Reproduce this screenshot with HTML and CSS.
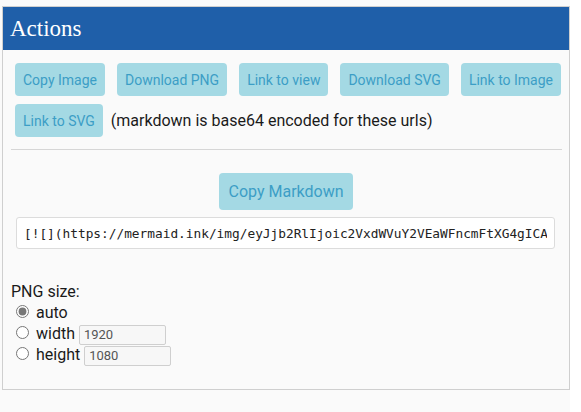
FILE: index.html
```html
<!DOCTYPE html>
<html>
<head>
<meta charset="utf-8">
<link rel="stylesheet" href="styles.css">
</head>
<body>
<div class="wrap">
  <section class="card">
    <h2 class="card-title">Actions</h2>
    <div class="card-body">
      <div class="btn-row">
        <button class="btn">Copy Image</button>
        <button class="btn">Download PNG</button>
        <button class="btn">Link to view</button>
        <button class="btn">Download SVG</button>
        <button class="btn">Link to Image</button>
        <button class="btn">Link to SVG</button>
        <span class="note">(markdown is base64 encoded for these urls)</span>
      </div>
      <hr class="divider">
      <div class="center">
        <button class="btn btn-lg">Copy Markdown</button>
      </div>
      <input class="md-input" type="text" readonly value="[![](https://mermaid.ink/img/eyJjb2RlIjoic2VxdWVuY2VEaWFncmFtXG4gICAgQWxpY2UtPj5Kb2huOiBIZWxsbyBKb2huIiwibWVybWFpZCI6eyJ0aGVtZSI6ImRlZmF1bHQifX0)](https://mermaid.live/edit)">
      <div class="png-size">
        <div class="ps-title">PNG size:</div>
        <label class="ps-opt"><input type="radio" name="ps" checked> auto</label>
        <label class="ps-opt"><input type="radio" name="ps"> width <input class="num" type="text" value="1920"></label>
        <label class="ps-opt"><input type="radio" name="ps"> height <input class="num" type="text" value="1080"></label>
      </div>
    </div>
  </section>
</div>
</body>
</html>
```
FILE: styles.css
```css
html, body {
  margin: 0;
  padding: 0;
  background: #ffffff;
}
body {
  font-family: Roboto, "Liberation Sans", sans-serif;
  color: #1a1a1a;
}
.wrap {
  width: 570px;
  height: 412px;
  box-sizing: border-box;
  background: #fafafa;
  padding: 6px 0 0 2px;
}
.card {
  width: 568px;
  height: 384px;
  box-sizing: border-box;
  border: 1px solid #cfcfcf;
  background: #fafafa;
}
.card-title {
  margin: 0;
  height: 43px;
  line-height: 43px;
  background: #1f5fa9;
  color: #ffffff;
  font-family: "Liberation Serif", "DejaVu Serif", serif;
  font-weight: normal;
  font-size: 23px;
  padding-left: 7px;
}
.card-body {
  padding: 13px 0 0 0;
}
.btn-row {
  display: flex;
  flex-wrap: wrap;
  align-items: center;
  gap: 8px 12px;
  padding: 0 6px 0 12px;
}
.btn {
  height: 33px;
  padding: 0 8px;
  border: none;
  border-radius: 4px;
  background: #a4d9e4;
  color: #3c9ec6;
  font-family: Roboto, "Liberation Sans", sans-serif;
  font-size: 14px;
}
.note {
  font-size: 16px;
  color: #1a1a1a;
  margin-left: -4px;
}
.divider {
  margin: 12px 7px 0 8px;
  border: none;
  border-top: 1px solid #d6d6d6;
  height: 0;
}
.center {
  display: flex;
  justify-content: center;
  margin-top: 23px;
}
.btn-lg {
  height: 37px;
  font-size: 16px;
  padding: 0 9px;
}
.md-input {
  display: block;
  box-sizing: border-box;
  margin: 7px 13px 0 13px;
  width: 539px;
  height: 32px;
  border: 1px solid #dcdcdc;
  border-radius: 3px;
  background: #ffffff;
  padding: 0 7px;
  font-family: "DejaVu Sans Mono", monospace;
  font-size: 12.8px;
  color: #222;
  outline: none;
}
.png-size {
  margin-top: 32px;
  padding-left: 8px;
  font-size: 16px;
  line-height: 21px;
}
.ps-opt {
  display: block;
  height: 21px;
}
.ps-opt input[type=radio] {
  margin: 3px 3px 0 5px;
  accent-color: #777;
}
.num {
  box-sizing: border-box;
  width: 87px;
  height: 20px;
  border: 1px solid #cfcfcf;
  border-radius: 2px;
  background: #f7f7f7;
  color: #555;
  font-family: Roboto, "Liberation Sans", sans-serif;
  font-size: 13px;
  padding: 0 4px;
  vertical-align: middle;
}
```
